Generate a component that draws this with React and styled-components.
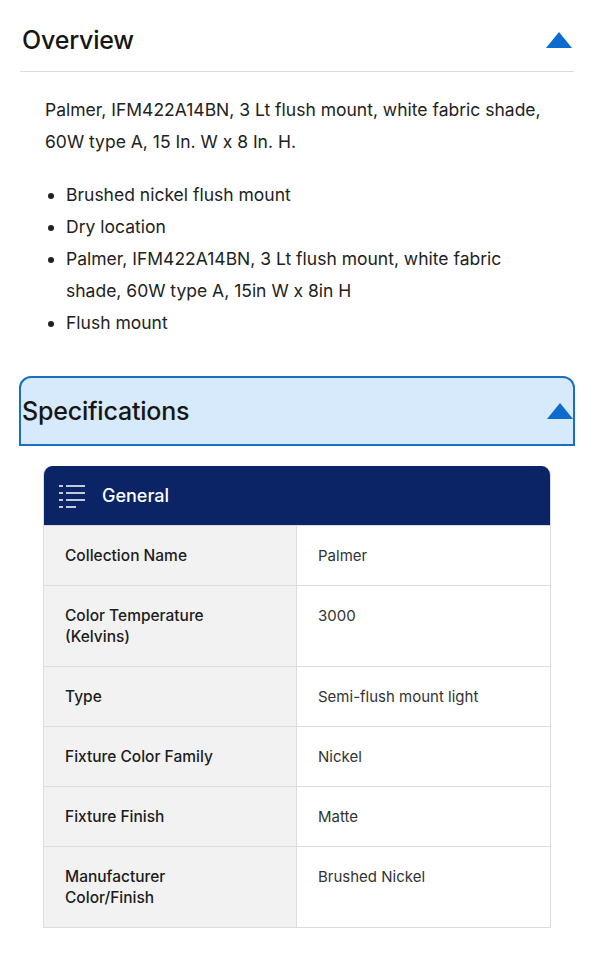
import React from 'react'
import styled, { createGlobalStyle } from 'styled-components'

const GlobalStyle = createGlobalStyle`
  body {
    margin: 0;
    background: #fff;
    font-family: Inter, 'Noto Sans', sans-serif;
    color: #1c1c1c;
  }
`

const Page = styled.div`
  width: 594px;
  padding: 8px 20px 0 20px;
  box-sizing: border-box;
`

const SectionHeader = styled.div`
  display: flex;
  align-items: center;
  justify-content: space-between;
  height: 64px;
  padding: 0 2px;
  box-sizing: border-box;
  border-bottom: 1px solid #dcdcdc;
`

const ActiveHeader = styled(SectionHeader)`
  height: 70px;
  margin: 0 -1px 0 -1px;
  padding: 0 0 0 1px;
  background: #d7eafb;
  border: 2px solid #1b6fc2;
  border-radius: 12px 12px 0 0;
`

const Title = styled.h2`
  margin: 0;
  font-size: 25px;
  font-weight: 500;
  color: #161616;
  letter-spacing: -0.2px;
`

const Caret = styled.span`
  width: 0;
  height: 0;
  border-left: 13px solid transparent;
  border-right: 13px solid transparent;
  border-bottom: 16px solid #0b6cce;
`

const Body = styled.div`
  padding: 22px 20px 0 25px;
  font-size: 17.5px;
  line-height: 32px;
  color: #222;
`

const Para = styled.p`
  margin: 0 0 21px;
`

const List = styled.ul`
  margin: 0;
  padding: 0 0 0 21px;
`

const Spacer = styled.div`
  height: 37px;
`

const Table = styled.div`
  margin: 20px 23px 0 23px;
  border-radius: 9px 9px 0 0;
  overflow: hidden;
  border: 1px solid #dcdcdc;
  border-top: none;
`

const TableHead = styled.div`
  display: flex;
  align-items: center;
  gap: 16px;
  height: 59px;
  padding: 0 14px;
  background: #0b2466;
  color: #fff;
  font-size: 18px;
  font-weight: 500;
`

const Row = styled.div`
  display: grid;
  grid-template-columns: 253px 1fr;
  box-sizing: border-box;
  min-height: ${p => (p.$tall ? '80px' : '60px')};
  border-top: 1px solid #dcdcdc;
`

const Label = styled.div`
  background: #f2f2f2;
  border-right: 1px solid #dcdcdc;
  padding: 19px 21px;
  font-size: 15.5px;
  line-height: 21px;
  font-weight: 500;
  color: #1c1c1c;

  span {
    display: block;
    max-width: 170px;
  }
`

const Value = styled.div`
  padding: 19px 21px;
  font-size: 15px;
  line-height: 21px;
  color: #333;
`

const ListIcon = () => (
  <svg width="28" height="28" viewBox="0 0 28 28" fill="none" stroke="#fff" strokeWidth="1.6">
    <path d="M1 4h4M8 4h19M1 11h4M8 11h19M1 18h4M8 18h19M1 25h4M8 25h10" />
  </svg>
)

const specs = [
  ['Collection Name', 'Palmer'],
  ['Color Temperature (Kelvins)', '3000', true],
  ['Type', 'Semi-flush mount light'],
  ['Fixture Color Family', 'Nickel'],
  ['Fixture Finish', 'Matte'],
  ['Manufacturer Color/Finish', 'Brushed Nickel', true],
]

export default function App() {
  return (
    <Page>
      <GlobalStyle />
      <SectionHeader>
        <Title>Overview</Title>
        <Caret />
      </SectionHeader>
      <Body>
        <Para>
          Palmer, IFM422A14BN, 3 Lt flush mount, white fabric shade, 60W type A, 15 In. W x 8 In. H.
        </Para>
        <List>
          <li>Brushed nickel flush mount</li>
          <li>Dry location</li>
          <li>Palmer, IFM422A14BN, 3 Lt flush mount, white fabric shade, 60W type A, 15in W x 8in H</li>
          <li>Flush mount</li>
        </List>
      </Body>
      <Spacer />
      <ActiveHeader>
        <Title>Specifications</Title>
        <Caret />
      </ActiveHeader>
      <Table>
        <TableHead>
          <ListIcon />
          General
        </TableHead>
        {specs.map(([k, v, tall]) => (
          <Row key={k} $tall={tall}>
            <Label>
              <span>{k}</span>
            </Label>
            <Value>{v}</Value>
          </Row>
        ))}
      </Table>
    </Page>
  )
}
